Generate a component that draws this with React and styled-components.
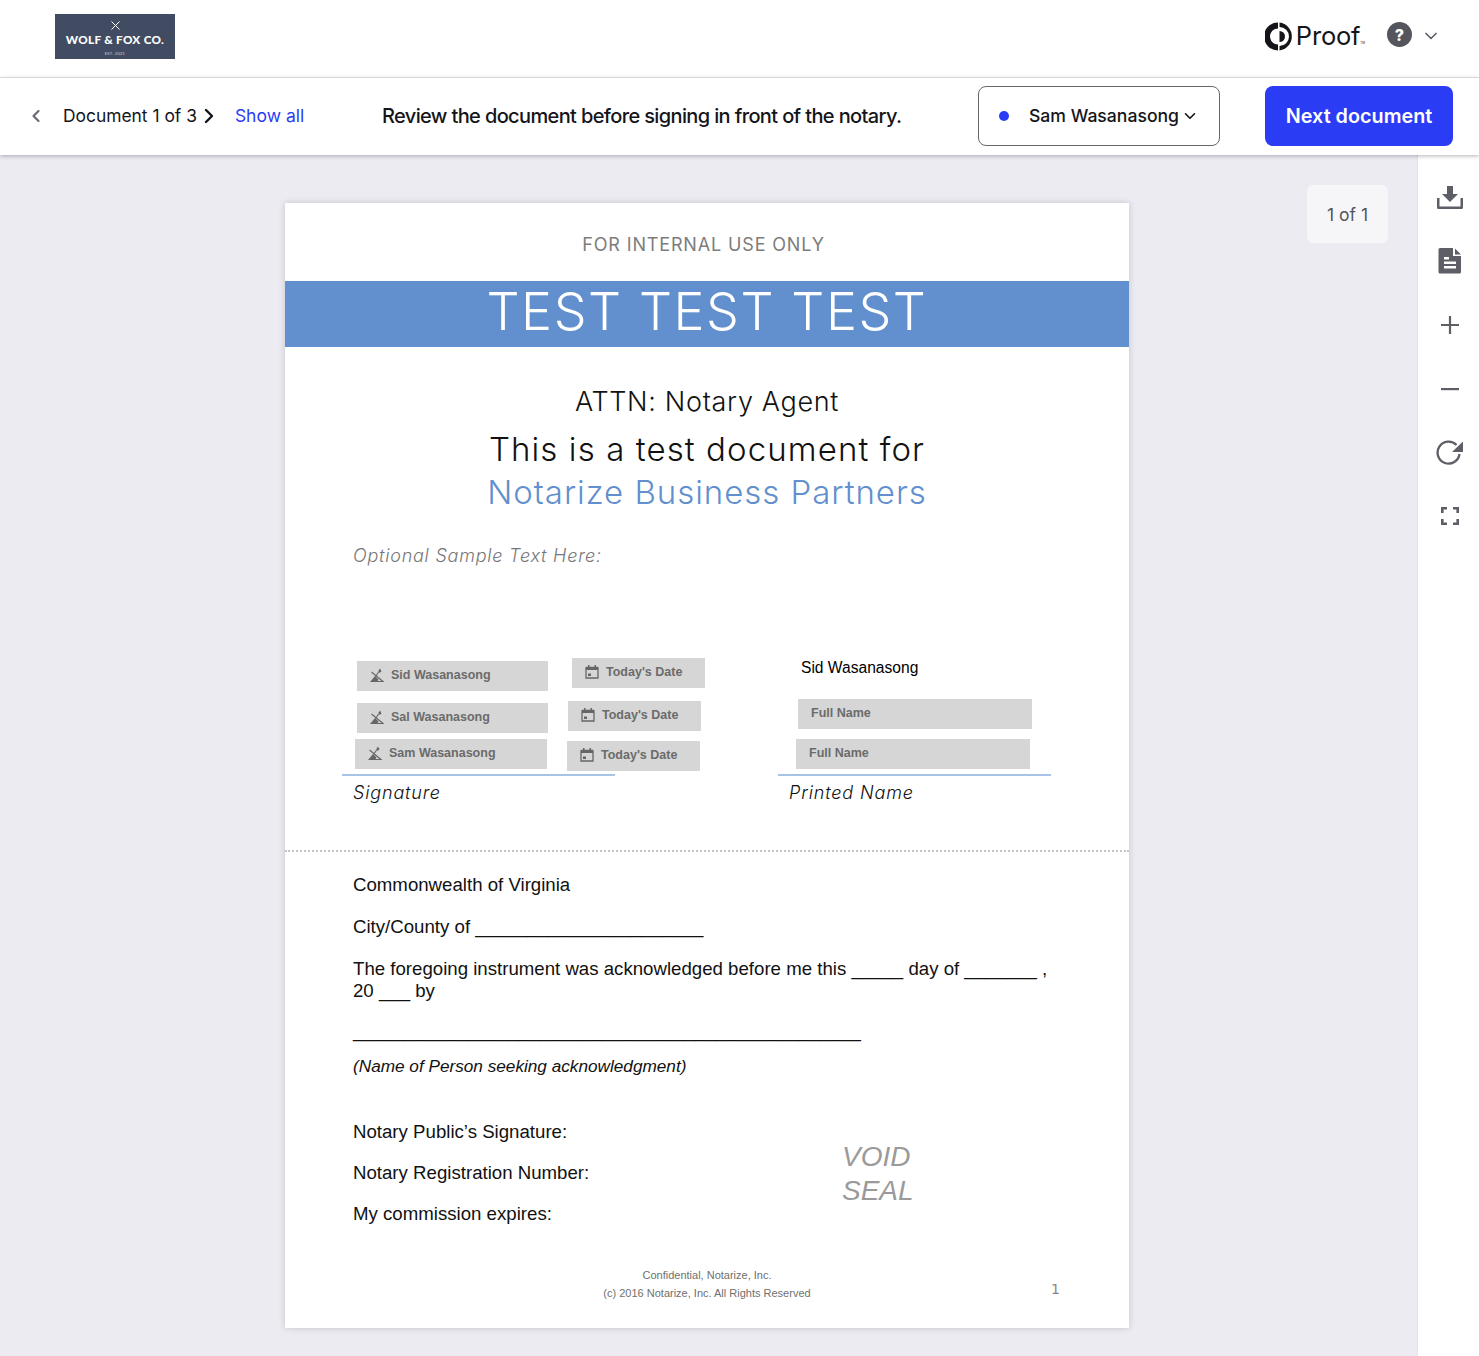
import styled, { createGlobalStyle } from "styled-components"
import { ChevronDown, ChevronLeft, ChevronRight } from "lucide-react"

const Global = createGlobalStyle`
html, body {
  margin: 0;
  padding: 0;
  background: #fff;
  font-family: Inter, "Liberation Sans", sans-serif;
}
* { box-sizing: border-box; }
`

const App = () => {
    return (
        <Page>
            <Global />
            <Header>
                <Logo>
                    <svg width="9" height="9" viewBox="0 0 9 9" stroke="#fff" strokeWidth="1">
                        <path d="M.5.5l8 8M8.500.5l-8 8" />
                    </svg>
                    <LogoName>WOLF &amp; FOX CO.</LogoName>
                    <LogoEst>EST. 2021</LogoEst>
                </Logo>
                <HeaderRight>
                    <ProofLogo>
                        <svg width="28" height="29" viewBox="0 0 28 29" fill="#14151a">
                            <path d="M13 .5a14 14 0 0 0 0 28v-6a8 8 0 0 1 0-16z" />
                            <path d="M14.500 .6A14 14 0 0 1 14.500 28.400V24A9.500 9.500 0 0 0 14.500 5z" />
                            <path d="M14.500 9A5.500 5.500 0 0 1 14.500 20z" />
                        </svg>
                        <ProofWord>Proof</ProofWord>
                        <ProofMark>TM</ProofMark>
                    </ProofLogo>
                    <HelpDot>?</HelpDot>
                    <ChevronDown size={20} color="#5d5e66" strokeWidth={2} />
                </HeaderRight>
            </Header>
            <Toolbar>
                <Pager>
                    <ChevronLeft size={20} color="#6b6c74" strokeWidth={2.6} />
                    <PagerLabel>Document 1 of 3</PagerLabel>
                    <ChevronRight size={24} color="#14151a" strokeWidth={2.4} />
                    <ShowAll>Show all</ShowAll>
                </Pager>
                <Instruction>Review the document before signing in front of the notary.</Instruction>
                <SignerSelect>
                    <SignerDot />
                    <SignerName>Sam Wasanasong</SignerName>
                    <ChevronDown size={20} color="#14151a" strokeWidth={2.2} />
                </SignerSelect>
                <NextButton>Next document</NextButton>
            </Toolbar>
            <Body>
                <Viewer>
                    <PageCount>1 of 1</PageCount>
                    <Sheet>
                        <Internal>FOR INTERNAL USE ONLY</Internal>
                        <Banner>TEST TEST TEST</Banner>
                        <Attn>ATTN: Notary Agent</Attn>
                        <Lead>This is a test document for</Lead>
                        <Lead $blue>Notarize Business Partners</Lead>
                        <Optional>Optional Sample Text Here:</Optional>
                        <SignRow>
                            <SignCol>
                                <SignLine />
                                <SignLabel>Signature</SignLabel>
                            </SignCol>
                            <SignCol>
                                <SignLine />
                                <SignLabel>Printed Name</SignLabel>
                            </SignCol>
                        </SignRow>
                        <Perforation />
                        <Ack>
                            <AckLine $gap={20}>Commonwealth of Virginia</AckLine>
                            <AckLine $gap={20}>City/County of ______________________</AckLine>
                            <AckLine $gap={18}>The foregoing instrument was acknowledged before me this _____ day of _______ ,<br />20 ___ by</AckLine>
                            <AckLine $gap={13}>_________________________________________________</AckLine>
                            <AckNote>(Name of Person seeking acknowledgment)</AckNote>
                            <NotaryRow>
                                <div>
                                    <AckLine $gap={19}>Notary Public’s Signature:</AckLine>
                                    <AckLine $gap={19}>Notary Registration Number:</AckLine>
                                    <AckLine $gap={0}>My commission expires:</AckLine>
                                </div>
                                <VoidSeal>VOID<br />SEAL</VoidSeal>
                            </NotaryRow>
                        </Ack>
                        <Foot>
                            <FootCenter>Confidential, Notarize, Inc.<br />(c) 2016 Notarize, Inc. All Rights Reserved</FootCenter>
                            <FootNum>1</FootNum>
                        </Foot>

                        <Field $left={72} $top={458} $width={191}><PenIcon />Sid Wasanasong</Field>
                        <Field $left={72} $top={500} $width={191}><PenIcon />Sal Wasanasong</Field>
                        <Field $left={70} $top={536} $width={192}><PenIcon />Sam Wasanasong</Field>
                        <Field $left={287} $top={455} $width={133}><CalIcon />Today's Date</Field>
                        <Field $left={283} $top={498} $width={133}><CalIcon />Today's Date</Field>
                        <Field $left={282} $top={538} $width={133}><CalIcon />Today's Date</Field>
                        <FilledName>Sid Wasanasong</FilledName>
                        <Field $left={513} $top={496} $width={234}>Full Name</Field>
                        <Field $left={511} $top={536} $width={234}>Full Name</Field>
                    </Sheet>
                </Viewer>
                <Rail>
                    <RailIcon>
                        <svg width="26" height="24" viewBox="0 0 26 24" fill="#5d5e66">
                            <path d="M10 0h6v8h5l-8 8-8-8h5z" />
                            <path d="M0 12h2.500v8.500h21V12H26v9.500a1.500 1.500 0 0 1-1.500 1.500h-23A1.500 1.500 0 0 1 0 21.500z" />
                        </svg>
                    </RailIcon>
                    <RailIcon>
                        <svg width="24" height="26" viewBox="0 0 24 26" fill="#5d5e66">
                            <path fillRule="evenodd" d="M2 0h13v8h8v16a1.500 1.500 0 0 1-1.500 1.500H2A1.500 1.500 0 0 1 .5 24V1.500A1.500 1.500 0 0 1 2 0zM6 9v2.500h5V9zM6 13.500V16h12v-2.500zM6 18v2.500h12V18z" />
                            <path d="M17 .5l6 6h-6z" />
                        </svg>
                    </RailIcon>
                    <RailIcon>
                        <svg width="20" height="20" viewBox="0 0 20 20" fill="#5d5e66"><path d="M8.900 1h2.200v7.900H19v2.200h-7.900V19H8.900v-7.900H1V8.900h7.900z" /></svg>
                    </RailIcon>
                    <RailIcon>
                        <svg width="20" height="20" viewBox="0 0 20 20" fill="#5d5e66"><path d="M1 9h18v2.200H1z" /></svg>
                    </RailIcon>
                    <RailIcon>
                        <svg width="30" height="28" viewBox="0 0 30 28" fill="none">
                            <path d="M24.500 16A11 11 0 1 1 21.500 7" stroke="#5d5e66" strokeWidth="2.300" />
                            <path d="M28 3.500v10.500H17z" fill="#5d5e66" />
                        </svg>
                    </RailIcon>
                    <RailIcon>
                        <svg width="20" height="20" viewBox="0 0 20 20" fill="none" stroke="#5d5e66" strokeWidth="2.600">
                            <path d="M2.300 7V2.300H7M13 2.300h4.700V7M17.700 13v4.700H13M7 17.700H2.300V13" />
                        </svg>
                    </RailIcon>
                </Rail>
            </Body>
        </Page>
    )
}

const PenIcon = () => (
    <TagIcon width="14" height="14" viewBox="0 0 14 14" fill="#666">
        <path d="M0 14l5-6 3.500 3.500L7 14z" />
        <path d="M1.500 4l11.500 9.500H7" fill="none" stroke="#666" strokeWidth="1.100" />
        <path d="M5.500 8.500L9 3.500" fill="none" stroke="#666" strokeWidth="1.100" />
        <path d="M8.500 2.500L10 .5l1.500 3-2 1.500z" />
    </TagIcon>
)

const CalIcon = () => (
    <TagIcon width="14" height="14" viewBox="0 0 14 14" fill="none">
        <path d="M1 3h12v10H1z" stroke="#666" strokeWidth="1.300" />
        <path d="M1 1.800h12v3.200H1zM3 0h1.500v2H3zM9.500 0H11v2H9.500zM3 8.500h3v2.500H3z" fill="#666" />
    </TagIcon>
)

const Page = styled.div`
width: 1479px;
height: 1356px;
display: flex;
flex-direction: column;
overflow: hidden;
background: #fff;
color: #14151a;
`
const Header = styled.header`
height: 78px;
flex: none;
display: flex;
justify-content: space-between;
align-items: flex-start;
padding: 14px 38px 0 55px;
border-bottom: 1px solid #e8e8ea;
`
const Logo = styled.div`
width: 120px;
height: 45px;
padding-top: 7px;
background: #414c63;
color: #fff;
display: flex;
flex-direction: column;
align-items: center;
font-family: Lato, sans-serif;
`
const LogoName = styled.span`
font-size: 11.700px;
line-height: 14px;
margin-top: 2px;
font-weight: 900;
letter-spacing: .3px;
white-space: nowrap;
`
const LogoEst = styled.span`
font-size: 4px;
line-height: 6px;
margin-top: 5px;
opacity: .7;
letter-spacing: .3px;
`
const HeaderRight = styled.div`
height: 30px;
display: flex;
align-items: center;
margin-top: 7px;
`
const ProofLogo = styled.div`
display: flex;
align-items: center;
margin-right: 22px;
`
const ProofWord = styled.span`
font-size: 25.500px;
font-weight: 400;
letter-spacing: -.2px;
line-height: 30px;
margin-left: 3px;
`
const ProofMark = styled.span`
font-size: 3px;
line-height: 3px;
align-self: flex-end;
margin-bottom: 6px;
`
const HelpDot = styled.div`
width: 25px;
height: 25px;
border-radius: 50%;
background: #55565d;
color: #fff;
font-size: 16px;
font-weight: 800;
display: flex;
align-items: center;
justify-content: center;
margin: -3px 9px 0 0;
`
const Toolbar = styled.div`
height: 77px;
flex: none;
display: flex;
align-items: center;
position: relative;
z-index: 2;
padding: 0 26px 2px 26px;
background: #fff;
box-shadow: 0 1px 4px rgba(40, 40, 60, .35);
`
const Pager = styled.div`
width: 356px;
display: flex;
align-items: center;
`
const PagerLabel = styled.span`
font-size: 17.400px;
margin-left: 17px;
`
const ShowAll = styled.a`
font-size: 17.500px;
color: #2b3cf5;
margin-left: 14px;
`
const Instruction = styled.div`
width: 596px;
font-size: 20px;
font-weight: 500;
letter-spacing: -.63px;
white-space: nowrap;
`
const SignerSelect = styled.div`
width: 242px;
height: 60px;
border: 1px solid #66676d;
border-radius: 8px;
display: flex;
align-items: center;
padding: 0 20px;
`
const SignerDot = styled.span`
flex: none;
width: 10px;
height: 10px;
border-radius: 50%;
background: #2b3cf5;
margin-right: 20px;
`
const SignerName = styled.span`
font-size: 17.600px;
font-weight: 500;
margin-right: 2px;
white-space: nowrap;
`
const NextButton = styled.button`
width: 188px;
height: 60px;
margin-left: 45px;
border: 0;
border-radius: 8px;
background: #2b3cf5;
color: #fff;
font: 600 19.800px Inter, sans-serif;
`
const Body = styled.div`
flex: 1;
display: flex;
min-height: 0;
`
const Viewer = styled.main`
flex: 1;
position: relative;
background: #ecebf1;
padding: 48px 0 0 285px;
`
const PageCount = styled.div`
position: absolute;
top: 30px;
right: 29px;
width: 81px;
height: 58px;
background: #f6f6f9;
border-radius: 6px;
color: #55565d;
font-size: 17.500px;
display: flex;
align-items: center;
justify-content: center;
`
const Sheet = styled.div`
position: relative;
width: 844px;
height: 1125px;
background: #fff;
box-shadow: 0 0 6px rgba(60, 60, 80, .22);
display: flex;
flex-direction: column;
align-items: center;
font-family: "Liberation Sans", Arial, sans-serif;
`
const Internal = styled.div`
height: 78px;
padding: 31px 7px 0 0;
font: 400 18px/22px Inter, sans-serif;
letter-spacing: .85px;
color: #7d7d7d;
`
const Banner = styled.div`
width: 100%;
height: 66px;
background: #628fcd;
color: #fff;
text-align: center;
font: 300 52px/62px Inter, sans-serif;
letter-spacing: 1.570px;
`
const Attn = styled.div`
margin-top: 37px;
font: 300 27px/36px Inter, sans-serif;
letter-spacing: .67px;
color: #111;
`
const Lead = styled.div`
font: 300 33px/43px Inter, sans-serif;
letter-spacing: ${(p) => (p.$blue ? ".96px" : "1.100px")};
color: ${(p) => (p.$blue ? "#628fcd" : "#111")};
margin-top: ${(p) => (p.$blue ? "0" : "8px")};
`
const Optional = styled.div`
align-self: flex-start;
margin: 30px 0 0 68px;
font: italic 300 18px/24px Inter, sans-serif;
letter-spacing: .77px;
color: #777;
`
const SignRow = styled.div`
align-self: stretch;
display: flex;
gap: 163px;
margin-top: 206px;
padding-left: 57px;
`
const SignCol = styled.div`
width: 273px;
`
const SignLine = styled.div`
height: 2px;
background: #a9c3e6;
`
const SignLabel = styled.div`
margin: 5px 0 0 11px;
font: italic 300 18px/24px Inter, sans-serif;
letter-spacing: .85px;
color: #111;
`
const Perforation = styled.div`
align-self: stretch;
margin-top: 45px;
border-top: 2px dotted #c4c4c4;
`
const Ack = styled.div`
align-self: stretch;
padding: 22px 68px 0;
font-size: 18.650px;
line-height: 22px;
color: #111;
`
const AckLine = styled.div`
margin-bottom: ${(p) => p.$gap}px;
`
const AckNote = styled.div`
font-style: italic;
font-size: 17.200px;
`
const NotaryRow = styled.div`
display: flex;
margin-top: 44px;
`
const VoidSeal = styled.div`
position: absolute;
left: 557px;
top: 937px;
font: italic 400 28px/34px "Liberation Sans", sans-serif;
color: #9a9a9a;
`
const Foot = styled.div`
align-self: stretch;
position: relative;
margin-top: 41px;
text-align: center;
`
const FootCenter = styled.div`
font-size: 11px;
line-height: 18px;
color: #6f6f6f;
`
const FootNum = styled.div`
position: absolute;
right: 69px;
top: 15px;
font: 14px "DejaVu Sans", sans-serif;
color: #888;
`
const Field = styled.div`
position: absolute;
left: ${(p) => p.$left}px;
top: ${(p) => p.$top}px;
width: ${(p) => p.$width}px;
height: 30px;
background: #d6d6d6;
display: flex;
align-items: center;
padding: 0 0 2px 13px;
font-size: 12.500px;
font-weight: 700;
color: #6b6b6b;
`
const TagIcon = styled.svg`
margin-right: 7px;
flex: none;
`
const FilledName = styled.div`
position: absolute;
left: 516px;
top: 456px;
font-size: 15.600px;
line-height: 18px;
color: #000;
`
const Rail = styled.aside`
width: 62px;
flex: none;
background: #fff;
border-left: 1px solid #e4e4e8;
display: flex;
flex-direction: column;
align-items: center;
padding: 11px 0 0 3px;
`
const RailIcon = styled.div`
height: 63.600px;
flex: none;
display: flex;
align-items: center;
justify-content: center;
`

export default App
